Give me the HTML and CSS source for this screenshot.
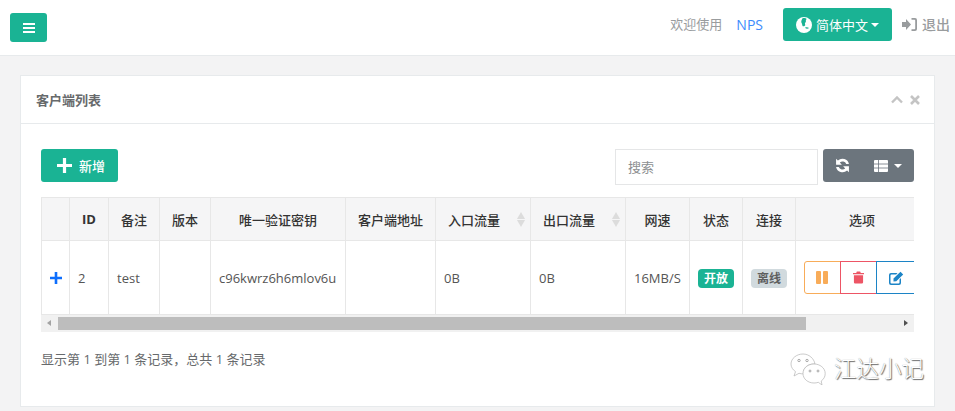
FILE: index.html
```html
<!DOCTYPE html>
<html lang="zh">
<head>
<meta charset="utf-8">
<title>客户端列表</title>
<link rel="stylesheet" href="styles.css">
</head>
<body>
<header class="topbar">
  <button class="menu-btn" aria-label="菜单">
    <svg class="ico-bars" viewBox="0 0 12 10"><path d="M0 0h12v2H0zM0 4h12v2H0zM0 8h12v2H0z" fill="#fff"/></svg>
  </button>
  <nav class="top-right">
    <span class="welcome">欢迎使用</span>
    <a class="brand">NPS</a>
    <button class="lang-btn">
      <svg class="ico-globe" viewBox="0 0 16 16"><circle cx="8" cy="8" r="8" fill="#fff"/><path d="M6.500 1.200C8.500.8 10 1.200 10.600 2 9.800 3 9.600 4 10 5 8.800 5.600 8.600 7 9.400 8 8.800 9 7.800 9.600 6.800 9.200 6 8.400 6.400 7 5.600 6 4.800 5 5.600 2.800 6.500 1.200ZM9 10.800c1.200-.6 2.800-.6 4 .1-.8 1-2.800 1.200-4-.1Z" fill="#1ab394"/></svg>
      <span>简体中文</span><i class="caret"></i>
    </button>
    <a class="logout">
      <svg class="ico-signin" viewBox="0 0 15 13"><path d="M0 4h4V1l5 5.500L4 12V9H0z" fill="#999c9e"/><path d="M9.500 0H13a2 2 0 0 1 2 2v9a2 2 0 0 1-2 2H9.500v-1.800H12.500a.7.7 0 0 0 .7-.7V2.500a.7.7 0 0 0-.7-.7H9.500z" fill="#999c9e"/></svg>
      <span>退出</span>
    </a>
  </nav>
</header>

<main class="content">
  <section class="card">
    <div class="card-head">
      <h5>客户端列表</h5>
      <div class="card-tools">
        <svg class="ico-up" viewBox="0 0 12 8"><path d="M1 6.500 6 1.500l5 5" fill="none" stroke="#c4c4c4" stroke-width="2.400"/></svg>
        <svg class="ico-x" viewBox="0 0 10 10"><path d="M1 1l8 8M9 1l-8 8" fill="none" stroke="#c4c4c4" stroke-width="2.600"/></svg>
      </div>
    </div>
    <div class="card-body">
      <div class="toolbar">
        <button class="add-btn">
          <svg class="ico-plus" viewBox="0 0 14 14"><path d="M5.500 0h3v5.500H14v3H8.500V14h-3V8.500H0v-3h5.500z" fill="#fff"/></svg>
          <span>新增</span>
        </button>
        <div class="toolbar-right">
          <input class="search" type="text" placeholder="搜索">
          <div class="tool-group">
            <button class="tool-btn tool-refresh" aria-label="刷新">
              <svg class="ico-refresh" viewBox="0 0 14 14"><path d="M13 5.600A6.200 6.200 0 0 0 2.700 2.300L1 .8V6.200H6.400L4.500 4.300A3.700 3.700 0 0 1 10.500 5.600ZM1 8.400A6.200 6.200 0 0 0 11.300 11.700L13 13.200V7.800H7.600L9.500 9.700A3.700 3.700 0 0 1 3.500 8.400Z" fill="#fff"/></svg>
            </button>
            <button class="tool-btn tool-cols" aria-label="列">
              <svg class="ico-table" viewBox="0 0 14 12"><path d="M0 1a1 1 0 0 1 1-1h12a1 1 0 0 1 1 1v10a1 1 0 0 1-1 1H1a1 1 0 0 1-1-1z" fill="#fff"/><path d="M4.500 0v12M0 4h14M0 8h14" stroke="#6c757d" stroke-width=".8"/></svg>
              <i class="caret"></i>
            </button>
          </div>
        </div>
      </div>

      <div class="table-wrap">
        <table class="grid">
          <colgroup>
            <col class="c-exp"><col class="c-id"><col class="c-note"><col class="c-ver"><col class="c-key"><col class="c-addr"><col class="c-in"><col class="c-out"><col class="c-speed"><col class="c-status"><col class="c-conn"><col class="c-ops">
          </colgroup>
          <thead>
            <tr>
              <th></th><th class="latin">ID</th><th>备注</th><th>版本</th><th>唯一验证密钥</th><th>客户端地址</th>
              <th class="sortable">入口流量<i class="sort"></i></th>
              <th class="sortable">出口流量<i class="sort"></i></th>
              <th>网速</th><th>状态</th><th>连接</th><th>选项</th>
            </tr>
          </thead>
          <tbody>
            <tr>
              <td class="exp"><svg class="ico-expand" viewBox="0 0 12 12"><path d="M4.700 0h2.600v4.700H12v2.600H7.300V12H4.700V7.300H0V4.700h4.700z" fill="#0d6efd"/></svg></td>
              <td>2</td><td>test</td><td></td><td>c96kwrz6h6mlov6u</td><td></td><td>0B</td><td>0B</td><td>16MB/S</td>
              <td class="center"><span class="badge badge-on">开放</span></td>
              <td class="center"><span class="badge badge-off">离线</span></td>
              <td class="ops">
                <div class="op-group">
                  <button class="op op-pause" aria-label="暂停"><svg class="ico-pause" viewBox="0 0 12 13"><rect width="5" height="13" rx="1" fill="#f8ac59"/><rect x="7" width="5" height="13" rx="1" fill="#f8ac59"/></svg></button>
                  <button class="op op-del" aria-label="删除"><svg class="ico-trash" viewBox="0 0 12 13"><path d="M0 1.500h3.500L4.200 0h3.600l.7 1.500H12V3H0zM1 4h10v7.700A1.300 1.300 0 0 1 9.700 13H2.300A1.300 1.300 0 0 1 1 11.700z" fill="#ed5565"/></svg></button>
                  <button class="op op-edit" aria-label="编辑"><svg class="ico-edit" viewBox="0 0 15 14"><path d="M2 2h6.500L7.200 3.400H2.500a1 1 0 0 0-1 1v7a1 1 0 0 0 1 1h7a1 1 0 0 0 1-1V8.400L12 7v5a2 2 0 0 1-2 2H2a2 2 0 0 1-2-2V4a2 2 0 0 1 2-2Z" fill="#1c84c6"/><path d="M4.500 7.500 11.500.7l2.700 2.700L7.300 10.300 4.500 10.500ZM12.200 0l2.700 2.700" fill="#1c84c6"/></svg></button>
                </div>
              </td>
            </tr>
          </tbody>
        </table>
      </div>
      <div class="hscroll">
        <i class="arr arr-l"></i>
        <div class="thumb"></div>
        <i class="arr arr-r"></i>
      </div>
      <p class="summary">显示第 1 到第 1 条记录，总共 1 条记录</p>
    </div>
  </section>
</main>

<div class="watermark">
  <svg class="ico-wechat" viewBox="0 0 36 32"><g fill="#fff" stroke="#b5b5b5" stroke-width=".7"><path d="M13 1C6.500 1 1 5.500 1 11c0 3.200 1.800 5.800 4.500 7.600L4 23l5-2.700c1.400.4 3 .6 4.500.6C12.500 15 18 10.500 25 11 24 5.500 19 1 13 1Z"/><path d="M24 11C18 11 13 15 13 20.500S18 30 24 30c1.500 0 3-.2 4.300-.7L32 32l-.8-4c2.500-1.700 4-4.300 4-7.500C35.200 15 30 11 24 11Z"/></g><g fill="#fff" stroke="#8a8a8a" stroke-width=".7"><circle cx="9" cy="7.500" r="1.200"/><circle cx="17" cy="7.500" r="1.200"/><circle cx="20" cy="18" r="1"/><circle cx="28" cy="18" r="1"/></g></svg>
  <span>江达小记</span>
</div>
</body>
</html>
```
FILE: styles.css
```css
* { box-sizing: border-box; }
html, body { margin: 0; padding: 0; }
body {
  width: 955px;
  height: 411px;
  overflow: hidden;
  position: relative;
  background: #f3f3f4;
  font-family: "Open Sans", "Noto Sans CJK SC", sans-serif;
  font-size: 13px;
  color: #676a6c;
}
button { font-family: inherit; border: 0; padding: 0; cursor: pointer; }
svg { display: block; }

.topbar {
  height: 56px;
  background: #fff;
  border-bottom: 1px solid #e7eaec;
  display: flex;
  justify-content: space-between;
  padding: 13px 5px 0 10px;
}
.menu-btn {
  width: 37px;
  height: 29px;
  background: #1ab394;
  border-radius: 3px;
  display: flex;
  align-items: center;
  justify-content: center;
}
.ico-bars { width: 12px; height: 10px; }
.top-right {
  display: flex;
  align-items: flex-start;
  margin-top: -5px;
  height: 33px;
  color: #999c9e;
  font-size: 13px;
  line-height: 33px;
}
.welcome { margin-right: 14px; }
.brand { color: #3d8bfd; margin-right: 20px; font-size: 14px; }
.lang-btn {
  width: 109px;
  height: 33px;
  background: #1ab394;
  border-radius: 3px;
  color: #fff;
  font-size: 13px;
  display: flex;
  align-items: center;
  padding-left: 13px;
  margin-right: 10px;
}
.ico-globe { width: 16px; height: 16px; margin-right: 4px; }
.caret {
  display: inline-block;
  width: 0;
  height: 0;
  border-left: 4px solid transparent;
  border-right: 4px solid transparent;
  border-top: 4px solid #fff;
  margin-left: 3px;
}
.logout {
  display: flex;
  align-items: center;
  height: 33px;
  font-size: 14px;
  font-weight: 500;
  color: #999c9e;
}
.ico-signin { width: 15px; height: 13px; margin-right: 5px; }

.content { padding: 19px 20px 0; }
.card {
  height: 332px;
  background: #fff;
  border: 1px solid #e7eaec;
}
.card-head {
  height: 48px;
  border-bottom: 1px solid #e7eaec;
  display: flex;
  align-items: center;
  justify-content: space-between;
  padding: 0 14px 0 15px;
}
.card-head h5 {
  margin: 0;
  font-size: 13px;
  font-weight: 700;
  color: #676a6c;
}
.card-tools { display: flex; align-items: center; gap: 7px; }
.ico-up { width: 12px; height: 8px; }
.ico-x { width: 10px; height: 10px; }

.card-body { padding: 25px 20px 0; }
.toolbar {
  display: flex;
  justify-content: space-between;
  align-items: flex-start;
  height: 48px;
}
.add-btn {
  width: 77px;
  height: 33px;
  background: #1ab394;
  border-radius: 3px;
  color: #fff;
  font-size: 13px;
  font-weight: 500;
  display: flex;
  align-items: center;
  padding-left: 16px;
}
.ico-plus { width: 15px; height: 15px; margin-right: 7px; }
.toolbar-right { display: flex; align-items: flex-start; gap: 5px; }
.search {
  width: 203px;
  height: 36px;
  border: 1px solid #e5e6e7;
  padding: 0 12px;
  font-family: inherit;
  font-size: 13px;
  outline: none;
}
.search::placeholder { color: #8d8f91; opacity: 1; }
.tool-group {
  width: 91px;
  height: 33px;
  background: #6c757d;
  border-radius: 3px;
  display: flex;
}
.tool-btn { background: transparent; display: flex; align-items: center; justify-content: center; height: 33px; }
.tool-refresh { width: 38px; }
.tool-cols { width: 53px; }
.ico-refresh { width: 15px; height: 15px; }
.ico-table { width: 14px; height: 12px; }
.tool-cols .caret { margin-left: 6px; }

.table-wrap {
  width: 873px;
  height: 118px;
  overflow: hidden;
}
.grid {
  table-layout: fixed;
  border-collapse: collapse;
  width: 887px;
  color: #676a6c;
}
.c-exp { width: 28px; }
.c-id { width: 39px; }
.c-note { width: 51px; }
.c-ver { width: 51px; }
.c-key { width: 135px; }
.c-addr { width: 90px; }
.c-in { width: 95px; }
.c-out { width: 95px; }
.c-speed { width: 64px; }
.c-status { width: 53px; }
.c-conn { width: 53px; }
.c-ops { width: 133px; }
.grid th, .grid td {
  border: 1px solid #e7e7e7;
  padding: 0 8px;
  white-space: nowrap;
}
.grid thead tr { height: 43px; }
.grid tbody tr { height: 74px; }
.grid th {
  background: #f5f5f6;
  color: #333;
  font-size: 13px;
  font-weight: 500;
  text-align: center;
}
.grid .latin { font-weight: 700; }
.grid td { color: #555; font-size: 13px; }
.grid .sortable { text-align: left; position: relative; padding-left: 12px; }
.sort {
  position: absolute;
  right: 5px;
  top: 14px;
  width: 8px;
  height: 15px;
}
.sort::before, .sort::after {
  content: "";
  position: absolute;
  left: 0;
  border-left: 4px solid transparent;
  border-right: 4px solid transparent;
}
.sort::before { top: 0; border-bottom: 7px solid #dcdcdc; }
.sort::after { bottom: 0; border-top: 7px solid #dcdcdc; }
.grid .exp { text-align: center; padding: 0; }
.ico-expand { width: 12px; height: 12px; margin: 0 auto; }
.grid .center { text-align: center; padding: 0; }
.badge {
  display: inline-block;
  width: 36px;
  height: 19px;
  border-radius: 4px;
  font-size: 12px;
  font-weight: 700;
  line-height: 19px;
  text-align: center;
  vertical-align: middle;
}
.badge-on { background: #1ab394; color: #fff; }
.badge-off { background: #d1dade; color: #5e5e5e; }
.grid .ops { padding: 0 0 0 8px; }
.op-group { display: flex; width: 125px; }
.op {
  width: 37px;
  height: 33px;
  background: #fff;
  border: 1px solid;
  margin-right: -1px;
  display: flex;
  align-items: center;
  justify-content: center;
  flex: none;
}
.op-pause { border-color: #f8ac59; border-radius: 3px 0 0 3px; padding-right: 2px; }
.op-del { border-color: #ed5565; position: relative; }
.op-edit { border-color: #1c84c6; width: 50px; padding-right: 10px; position: relative; }
.ico-pause { width: 12px; height: 13px; }
.ico-trash { width: 11px; height: 13px; }
.ico-edit { width: 15px; height: 14px; }

.hscroll {
  width: 873px;
  height: 17px;
  background: #f1f1f1;
  position: relative;
  display: flex;
  align-items: center;
}
.thumb {
  position: absolute;
  left: 17px;
  top: 2px;
  width: 748px;
  height: 13px;
  background: #bdbdbd;
}
.arr {
  position: absolute;
  top: 5px;
  width: 0;
  height: 0;
  border-top: 3.5px solid transparent;
  border-bottom: 3.5px solid transparent;
}
.arr-l { left: 6px; border-right: 4px solid #a3a3a3; }
.arr-r { right: 6px; border-left: 4px solid #505050; }
.summary {
  margin: 18px 0 0;
  font-size: 13px;
  line-height: 18px;
  color: #676a6c;
}

.watermark {
  position: absolute;
  left: 790px;
  top: 353px;
  display: flex;
  align-items: center;
  gap: 8px;
  font-size: 22.5px;
  font-weight: 300;
  line-height: 32px;
  color: #fff;
  text-shadow: 1px 1px 1px #666, 0 0 1px #888;
}
.ico-wechat { width: 36px; height: 32px; }
```
